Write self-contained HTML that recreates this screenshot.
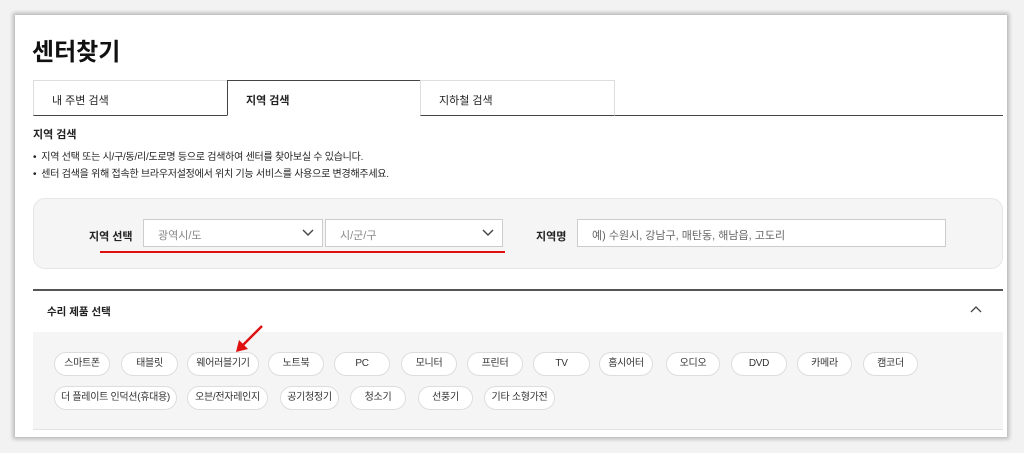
<!DOCTYPE html>
<html><head><meta charset="utf-8"><style>
*{box-sizing:border-box;margin:0;padding:0}
body{width:1024px;height:453px;background:#f2f2f2;font-family:"Liberation Sans","Noto Sans CJK KR",sans-serif;color:#222;position:relative;overflow:hidden}
.card{position:absolute;left:15px;top:15px;width:992px;height:422px;background:#fff;box-shadow:0 0 4px 2px rgba(0,0,0,.25)}
.a{position:absolute}
.t{font-size:11px;white-space:nowrap}
.tab{position:absolute;top:80px;height:36px;border:1px solid #ddd;border-bottom:1px solid #444;font-size:11px;padding:11px 0 0 18px;background:#fff}
.chip{position:absolute;height:24px;border:1px solid #ddd;border-radius:12px;background:#fff;font-size:10px;text-align:center;line-height:22px;color:#333;letter-spacing:-0.3px}
.sel{position:absolute;top:219px;height:28px;border:1px solid #ccc;background:#fff;font-size:11px;color:#888;padding:7px 0 0 14px}
</style></head><body>
<div class="card"></div>
<div class="a" style="left:32px;top:32px;font-size:24px;font-weight:bold;color:#111">센터찾기</div>
<div class="a" style="left:33px;top:115px;width:970px;height:1px;background:#444"></div>
<div class="tab" style="left:33px;width:195px">내 주변 검색</div>
<div class="tab" style="left:227px;width:194px;border:1px solid #444;border-bottom:1px solid #fff;font-weight:bold">지역 검색</div>
<div class="tab" style="left:420px;width:195px">지하철 검색</div>
<div class="a t" style="left:33px;top:126px;font-weight:bold">지역 검색</div>
<div class="a t" style="left:33px;top:148px;font-size:10px;letter-spacing:-0.25px">• &nbsp;지역 선택 또는 시/구/동/리/도로명 등으로 검색하여 센터를 찾아보실 수 있습니다.</div>
<div class="a t" style="left:33px;top:165px;font-size:10px;letter-spacing:-0.25px">• &nbsp;센터 검색을 위해 접속한 브라우저설정에서 위치 기능 서비스를 사용으로 변경해주세요.</div>
<div class="a" style="left:33px;top:198px;width:970px;height:71px;background:#f5f5f5;border:1px solid #e6e6e6;border-radius:12px"></div>
<div class="a t" style="left:89px;top:228px;font-weight:bold">지역 선택</div>
<div class="sel" style="left:143px;width:180px">광역시/도<svg class="a" style="right:8px;top:9px" width="12" height="8"><path d="M1 1l5 5 5-5" stroke="#444" stroke-width="1.4" fill="none"/></svg></div>
<div class="sel" style="left:325px;width:178px">시/군/구<svg class="a" style="right:8px;top:9px" width="12" height="8"><path d="M1 1l5 5 5-5" stroke="#444" stroke-width="1.4" fill="none"/></svg></div>
<div class="a" style="left:100px;top:251px;width:405px;height:2px;background:#e01010"></div>
<div class="a t" style="left:536px;top:228px;font-weight:bold">지역명</div>
<div class="sel" style="left:577px;width:369px;top:219px;color:#666">예) 수원시, 강남구, 매탄동, 해남읍, 고도리</div>
<div class="a" style="left:33px;top:289px;width:970px;height:2px;background:#555"></div>
<div class="a t" style="left:47px;top:304px;font-weight:bold;font-size:10.5px">수리 제품 선택</div>
<svg class="a" style="left:970px;top:306px" width="12" height="8"><path d="M1 6l5-5 5 5" stroke="#444" stroke-width="1.3" fill="none"/></svg>
<div class="a" style="left:33px;top:332px;width:970px;height:98px;background:#f5f5f5;border-bottom:1px solid #e2e2e2"></div>
<div class="chip" style="left:54px;top:352px;width:56px">스마트폰</div>
<div class="chip" style="left:121px;top:352px;width:57px">태블릿</div>
<div class="chip" style="left:187px;top:352px;width:72px">웨어러블기기</div>
<div class="chip" style="left:268px;top:352px;width:56px">노트북</div>
<div class="chip" style="left:334px;top:352px;width:56px">PC</div>
<div class="chip" style="left:401px;top:352px;width:56px">모니터</div>
<div class="chip" style="left:467px;top:352px;width:56px">프린터</div>
<div class="chip" style="left:533px;top:352px;width:57px">TV</div>
<div class="chip" style="left:599px;top:352px;width:54px">홈시어터</div>
<div class="chip" style="left:666px;top:352px;width:54px">오디오</div>
<div class="chip" style="left:731px;top:352px;width:56px">DVD</div>
<div class="chip" style="left:797px;top:352px;width:55px">카메라</div>
<div class="chip" style="left:863px;top:352px;width:55px">캠코더</div>
<div class="chip" style="left:54px;top:386px;width:123px">더 플레이트 인덕션(휴대용)</div>
<div class="chip" style="left:187px;top:386px;width:81px">오븐/전자레인지</div>
<div class="chip" style="left:280px;top:386px;width:59px">공기청정기</div>
<div class="chip" style="left:350px;top:386px;width:56px">청소기</div>
<div class="chip" style="left:418px;top:386px;width:55px">선풍기</div>
<div class="chip" style="left:484px;top:386px;width:71px">기타 소형가전</div>
<svg class="a" style="left:230px;top:322px" width="36" height="32"><path d="M32 4L12 24" stroke="#e01010" stroke-width="2.5"/><path d="M6 30l3-12 9 9z" fill="#e01010"/></svg>
</body></html>
